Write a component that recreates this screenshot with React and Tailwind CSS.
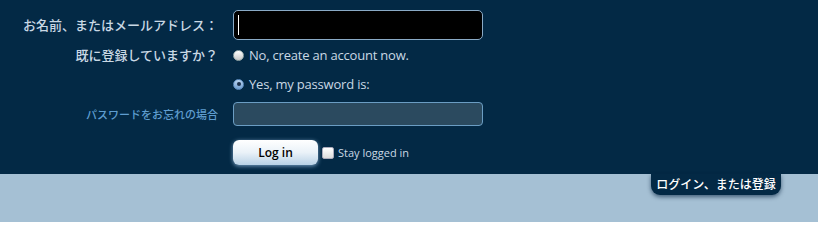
export default function App() {
  const font = { fontFamily: '"Open Sans", "Noto Sans CJK JP", sans-serif' }
  return (
    <div className="w-[818px] h-[222px] bg-[#a5c0d4] overflow-hidden" style={font}>
      <div className="bg-[#032945] h-[174px] pt-[10px]">
        <div className="grid grid-cols-[218px_250px] gap-x-[15px] items-center">
          {/* name / email */}
          <label className="text-right text-[13px] font-medium text-[#c9d8e4] leading-none">お名前、またはメールアドレス：</label>
          <div className="h-[30px] bg-black border border-[#8aaac6] rounded-[5px] flex items-center pl-[4px]">
            <span className="w-px h-[20px] bg-white" />
          </div>

          {/* registered? */}
          <label className="text-right text-[13px] font-medium text-[#c9d8e4] leading-none mt-[9px]">既に登録していますか？</label>
          <div className="flex items-center gap-[5px] mt-[9px] h-[12px]">
            <span className="w-[11px] h-[11px] rounded-full bg-gradient-to-b from-white to-[#c8c8c8] border border-[#9aa] shrink-0" />
            <span className="text-[13px] text-[#c9d8e4] leading-none tracking-[-0.2px]">No, create an account now.</span>
          </div>

          <div />
          <div className="flex items-center gap-[5px] mt-[16px] h-[12px]">
            <span className="w-[11px] h-[11px] rounded-full bg-gradient-to-b from-[#b9d3ee] to-[#6f9fd2] border border-[#5e8cbf] shrink-0 flex items-center justify-center">
              <span className="w-[4px] h-[4px] rounded-full bg-[#1b2f4a]" />
            </span>
            <span className="text-[13px] text-[#c9d8e4] leading-none tracking-[-0.2px]">Yes, my password is:</span>
          </div>

          {/* password */}
          <label className="text-right text-[11px] font-medium text-[#5f9dd0] leading-none mt-[12px]">パスワードをお忘れの場合</label>
          <div className="h-[24px] mt-[12px] bg-[#2b4a5f] border border-[#6b9dc3] rounded-[4px]" />

          {/* submit */}
          <div />
          <div className="flex items-center gap-[4px] mt-[14px]">
            <button className="w-[85px] h-[25px] rounded-[6px] bg-gradient-to-b from-white via-[#eaf2f8] to-[#b9d2e6] text-[12px] font-semibold text-black shadow-[0_1px_4px_rgba(150,190,225,0.8)]">
              Log in
            </button>
            <span className="w-[12px] h-[12px] bg-gradient-to-b from-white to-[#dcdcdc] rounded-[2px] border border-[#aab]" />
            <span className="text-[11px] text-[#c9d8e4] leading-none">Stay logged in</span>
          </div>
        </div>
      </div>
      <div className="flex justify-end pr-[37px]">
        <div className="w-[130px] h-[21px] bg-[#032945] rounded-b-[9px] shadow-[0_2px_4px_rgba(0,30,60,0.6)] flex items-center justify-center text-[12px] font-medium text-white">
          ログイン、または登録
        </div>
      </div>
    </div>
  )
}
